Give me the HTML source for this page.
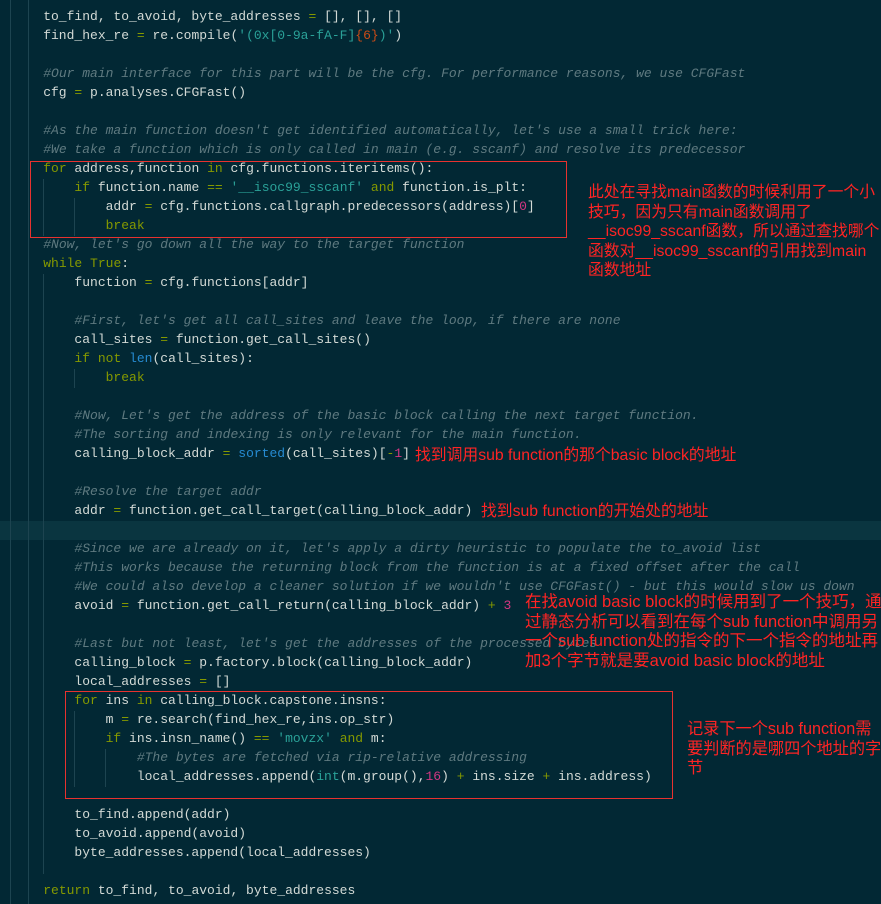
<!DOCTYPE html>
<html><head><meta charset="utf-8"><style>
body{margin:0;width:881px;height:904px;background:#022834;overflow:hidden;position:relative}
pre{position:absolute;left:12px;top:7px;margin:0;font:13px/19px "Liberation Mono",monospace;color:#d3dad6;white-space:pre}
.k{color:#859900}.s{color:#2aa198}.n{color:#d33682}.c{color:#5f7a80;font-style:italic}.o{color:#859900}.b{color:#268bd2}.r{color:#cb4b16}.i{color:#2aa198}
.g{position:absolute;width:1px;background:#1d4450}
.hl{position:absolute;left:0;width:881px;top:521px;height:19px;background:#0a3540}
.box{position:absolute;border:1px solid #e8322f}
.a{position:absolute;color:#ff2424;font:15.6px/19.5px "Liberation Sans","Noto Sans CJK SC",sans-serif;white-space:nowrap}
</style></head><body>
<div class="hl"></div>
<div class="g" style="left:10px;top:0;height:904px"></div>
<div class="g" style="left:28px;top:0;height:904px"></div>
<div class="g" style="left:43px;top:179px;height:57px"></div>
<div class="g" style="left:74px;top:198px;height:38px"></div>
<div class="g" style="left:43px;top:274px;height:600px"></div>
<div class="g" style="left:74px;top:369px;height:19px"></div>
<div class="g" style="left:74px;top:711px;height:76px"></div>
<div class="g" style="left:105px;top:749px;height:38px"></div>
<pre>    to_find, to_avoid, byte_addresses <span class="o">=</span> [], [], []
    find_hex_re <span class="o">=</span> re.compile(<span class="s">'(0x[0-9a-fA-F]<span class="r">{6}</span>)'</span>)

    <span class="c">#Our main interface for this part will be the cfg. For performance reasons, we use CFGFast</span>
    cfg <span class="o">=</span> p.analyses.CFGFast()

    <span class="c">#As the main function doesn't get identified automatically, let's use a small trick here:</span>
    <span class="c">#We take a function which is only called in main (e.g. sscanf) and resolve its predecessor</span>
    <span class="k">for</span> address,function <span class="k">in</span> cfg.functions.iteritems():
        <span class="k">if</span> function.name <span class="o">==</span> <span class="s">'__isoc99_sscanf'</span> <span class="k">and</span> function.is_plt:
            addr <span class="o">=</span> cfg.functions.callgraph.predecessors(address)[<span class="n">0</span>]
            <span class="k">break</span>
    <span class="c">#Now, let's go down all the way to the target function</span>
    <span class="k">while</span> <span class="k">True</span>:
        function <span class="o">=</span> cfg.functions[addr]

        <span class="c">#First, let's get all call_sites and leave the loop, if there are none</span>
        call_sites <span class="o">=</span> function.get_call_sites()
        <span class="k">if</span> <span class="k">not</span> <span class="b">len</span>(call_sites):
            <span class="k">break</span>

        <span class="c">#Now, Let's get the address of the basic block calling the next target function.</span>
        <span class="c">#The sorting and indexing is only relevant for the main function.</span>
        calling_block_addr <span class="o">=</span> <span class="b">sorted</span>(call_sites)[<span class="o">-</span><span class="n">1</span>]

        <span class="c">#Resolve the target addr</span>
        addr <span class="o">=</span> function.get_call_target(calling_block_addr)

        <span class="c">#Since we are already on it, let's apply a dirty heuristic to populate the to_avoid list</span>
        <span class="c">#This works because the returning block from the function is at a fixed offset after the call</span>
        <span class="c">#We could also develop a cleaner solution if we wouldn't use CFGFast() - but this would slow us down</span>
        avoid <span class="o">=</span> function.get_call_return(calling_block_addr) <span class="o">+</span> <span class="n">3</span>

        <span class="c">#Last but not least, let's get the addresses of the processed bytes</span>
        calling_block <span class="o">=</span> p.factory.block(calling_block_addr)
        local_addresses <span class="o">=</span> []
        <span class="k">for</span> ins <span class="k">in</span> calling_block.capstone.insns:
            m <span class="o">=</span> re.search(find_hex_re,ins.op_str)
            <span class="k">if</span> ins.insn_name() <span class="o">==</span> <span class="s">'movzx'</span> <span class="k">and</span> m:
                <span class="c">#The bytes are fetched via rip-relative addressing</span>
                local_addresses.append(<span class="i">int</span>(m.group(),<span class="n">16</span>) <span class="o">+</span> ins.size <span class="o">+</span> ins.address)

        to_find.append(addr)
        to_avoid.append(avoid)
        byte_addresses.append(local_addresses)

    <span class="k">return</span> to_find, to_avoid, byte_addresses</pre>
<div class="box" style="left:30px;top:161px;width:535px;height:75px"></div>
<div class="box" style="left:65px;top:691px;width:606px;height:106px"></div>
<div class="a" style="left:588px;top:183px;font-size:15.8px">此处在寻找main函数的时候利用了一个小<br>技巧，因为只有main函数调用了<br>__isoc99_sscanf函数，所以通过查找哪个<br>函数对__isoc99_sscanf的引用找到main<br>函数地址</div>
<div class="a" style="left:415px;top:446px;font-size:15.8px">找到调用sub function的那个basic block的地址</div>
<div class="a" style="left:481px;top:502px;font-size:15.8px">找到sub function的开始处的地址</div>
<div class="a" style="left:525px;top:593px;font-size:16.5px">在找avoid basic block的时候用到了一个技巧，通<br>过静态分析可以看到在每个sub function中调用另<br>一个sub function处的指令的下一个指令的地址再<br>加3个字节就是要avoid basic block的地址</div>
<div class="a" style="left:687px;top:720px;font-size:16.2px">记录下一个sub function需<br>要判断的是哪四个地址的字<br>节</div>
</body></html>
